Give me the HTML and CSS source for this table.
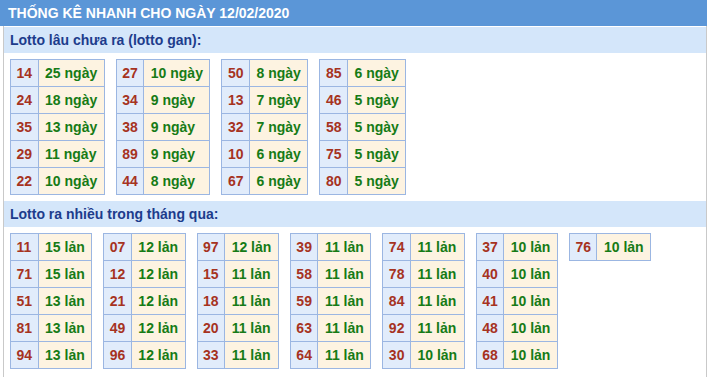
FILE: index.html
```html
<!DOCTYPE html>
<html lang="vi">
<head>
<meta charset="utf-8">
<title>Thống kê nhanh</title>
<link rel="stylesheet" href="styles.css">
</head>
<body>
<div class="title">THỐNG KÊ NHANH CHO NGÀY 12/02/2020</div>
<div class="box">
  <div class="sub">Lotto lâu chưa ra (lotto gan):</div>
  <div class="tables">
    <table><tr><td class="n">14</td><td class="v">25 ngày</td></tr><tr><td class="n">24</td><td class="v">18 ngày</td></tr><tr><td class="n">35</td><td class="v">13 ngày</td></tr><tr><td class="n">29</td><td class="v">11 ngày</td></tr><tr><td class="n">22</td><td class="v">10 ngày</td></tr></table>
    <table><tr><td class="n">27</td><td class="v">10 ngày</td></tr><tr><td class="n">34</td><td class="v">9 ngày</td></tr><tr><td class="n">38</td><td class="v">9 ngày</td></tr><tr><td class="n">89</td><td class="v">9 ngày</td></tr><tr><td class="n">44</td><td class="v">8 ngày</td></tr></table>
    <table><tr><td class="n">50</td><td class="v">8 ngày</td></tr><tr><td class="n">13</td><td class="v">7 ngày</td></tr><tr><td class="n">32</td><td class="v">7 ngày</td></tr><tr><td class="n">10</td><td class="v">6 ngày</td></tr><tr><td class="n">67</td><td class="v">6 ngày</td></tr></table>
    <table><tr><td class="n">85</td><td class="v">6 ngày</td></tr><tr><td class="n">46</td><td class="v">5 ngày</td></tr><tr><td class="n">58</td><td class="v">5 ngày</td></tr><tr><td class="n">75</td><td class="v">5 ngày</td></tr><tr><td class="n">80</td><td class="v">5 ngày</td></tr></table>
  </div>
  <div class="sub">Lotto ra nhiều trong tháng qua:</div>
  <div class="tables">
    <table><tr><td class="n">11</td><td class="v">15 lản</td></tr><tr><td class="n">71</td><td class="v">15 lản</td></tr><tr><td class="n">51</td><td class="v">13 lản</td></tr><tr><td class="n">81</td><td class="v">13 lản</td></tr><tr><td class="n">94</td><td class="v">13 lản</td></tr></table>
    <table><tr><td class="n">07</td><td class="v">12 lản</td></tr><tr><td class="n">12</td><td class="v">12 lản</td></tr><tr><td class="n">21</td><td class="v">12 lản</td></tr><tr><td class="n">49</td><td class="v">12 lản</td></tr><tr><td class="n">96</td><td class="v">12 lản</td></tr></table>
    <table><tr><td class="n">97</td><td class="v">12 lản</td></tr><tr><td class="n">15</td><td class="v">11 lản</td></tr><tr><td class="n">18</td><td class="v">11 lản</td></tr><tr><td class="n">20</td><td class="v">11 lản</td></tr><tr><td class="n">33</td><td class="v">11 lản</td></tr></table>
    <table><tr><td class="n">39</td><td class="v">11 lản</td></tr><tr><td class="n">58</td><td class="v">11 lản</td></tr><tr><td class="n">59</td><td class="v">11 lản</td></tr><tr><td class="n">63</td><td class="v">11 lản</td></tr><tr><td class="n">64</td><td class="v">11 lản</td></tr></table>
    <table><tr><td class="n">74</td><td class="v">11 lản</td></tr><tr><td class="n">78</td><td class="v">11 lản</td></tr><tr><td class="n">84</td><td class="v">11 lản</td></tr><tr><td class="n">92</td><td class="v">11 lản</td></tr><tr><td class="n">30</td><td class="v">10 lản</td></tr></table>
    <table><tr><td class="n">37</td><td class="v">10 lản</td></tr><tr><td class="n">40</td><td class="v">10 lản</td></tr><tr><td class="n">41</td><td class="v">10 lản</td></tr><tr><td class="n">48</td><td class="v">10 lản</td></tr><tr><td class="n">68</td><td class="v">10 lản</td></tr></table>
    <table><tr><td class="n">76</td><td class="v">10 lản</td></tr></table>
  </div>
</div>
</body>
</html>
```
FILE: styles.css
```css
html, body {
  margin: 0;
  padding: 0;
  background: #ffffff;
}
body {
  font-family: "Liberation Sans", Arial, sans-serif;
  font-size: 14px;
  font-weight: bold;
}
.title {
  width: 699px;
  height: 26px;
  line-height: 26px;
  padding-left: 8px;
  background: #5b96d7;
  color: #ffffff;
  font-size: 14px;
}
.box {
  margin-left: 3px;
  width: 702px;
  border-left: 1px solid #c9c9c9;
  border-right: 1px solid #c9c9c9;
  padding-top: 1px;
  min-height: 360px;
}
.sub {
  height: 26px;
  line-height: 26px;
  padding-left: 6px;
  background: #d4e6fa;
  color: #1d3c8c;
}
.tables {
  display: flex;
  flex-wrap: wrap;
  align-items: flex-start;
  gap: 11px;
  padding: 6px 6px 6px 6px;
}
table {
  border-collapse: collapse;
}
td {
  border: 1px solid #9bb6e2;
  height: 26px;
  padding: 0;
  white-space: nowrap;
  vertical-align: middle;
}
td.n {
  background: #e1ecfb;
  color: #a6331f;
  padding: 0 5.5px;
}
td.v {
  background: #fdf3e1;
  color: #167b16;
  padding: 0 6.5px;
}
```
